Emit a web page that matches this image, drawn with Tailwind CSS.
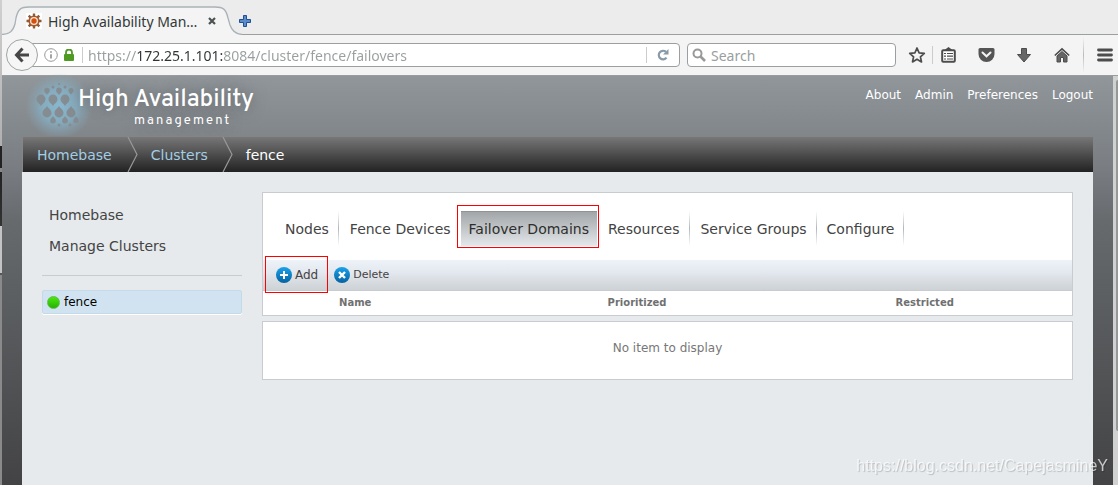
<!DOCTYPE html>
<html lang="en">
<head>
<meta charset="utf-8">
<title>High Availability Management</title>
<script src="https://cdn.jsdelivr.net/npm/@tailwindcss/browser@4"></script>
</head>
<body class="flex min-h-screen bg-[#ececec] font-['DejaVu_Sans',sans-serif]">
<div class="w-[2px] shrink-0 bg-[linear-gradient(to_bottom,#d0d0d0_0px,#b0b0b0_146px,#222_146px,#222_168px,#888_168px,#888_172px,#222_172px,#333_226px,#c4c4c4_226px,#c4c4c4_273px,#555_273px,#555_275px,#8a8a8a_275px)]"></div>
<div class="flex min-w-0 flex-1 flex-col">

  <!-- Browser chrome -->
  <header class="font-['Noto_Sans',sans-serif] text-[#333839]">
    <div class="relative h-[35px] border-b border-[#9b9f9f] bg-[#ececec]">
      <svg class="absolute top-0 left-0" width="240" height="35" viewBox="0 0 240 35" fill="none">
        <path d="M0 35V34C8 34 11 31 13 24L14 18C16 9 19 7 27 7H213C221 7 224 9 226 18L228 25C230 31 233 34 240 34V35Z" fill="#f4f4f4"/>
        <path d="M0 34.500C8 34 11 31 13 24L14 18C16 9 19 7 27 7H213C221 7 224 9 226 18L228 25C230 31 233 34 240 34.500" stroke="#a9b2b8" stroke-width="1.300"/>
      </svg>
      <div class="relative flex h-[34px] items-end pb-[3px] pl-6">
        <svg class="mb-[2px]" width="16" height="16" viewBox="0 0 16 16">
          <rect width="16" height="16" fill="#fff"/>
          <g stroke="#8a5a3a" stroke-width="2.400"><path d="M8 0.500V15.500M0.500 8H15.500M2.700 2.700L13.300 13.300M13.300 2.700L2.700 13.300"/></g>
          <circle cx="8" cy="8" r="5.600" fill="#a8562a"/><circle cx="8" cy="8" r="4" fill="#f3e4d4"/><circle cx="8" cy="8" r="2.700" fill="#d4500c"/>
        </svg>
        <span class="ml-[6px] w-[150px] text-sm leading-[18px]">High Availability Man…</span>
        <button class="mb-[6px] ml-[10px]" aria-label="Close tab"><svg class="block" width="8" height="8" viewBox="0 0 8 8"><path d="M1 1L7 7M7 1L1 7" stroke="#4c5252" stroke-width="2.200"/></svg></button>
        <button class="mb-1 ml-[23px]" aria-label="New tab"><svg class="block" width="12" height="12" viewBox="0 0 12 12"><path d="M4.500.5h3v4h4v3h-4v4h-3v-4h-4v-3h4z" fill="#5b8bc9" stroke="#1f4f96"/></svg></button>
      </div>
    </div>
    <div class="flex h-[41px] items-center border-b border-[#999d9f] bg-[#f4f4f4] pr-[5px] pl-1">
      <button class="relative z-10 flex size-8 shrink-0 items-center justify-center rounded-full border border-[#a0a4a4] bg-[#f6f6f6]" aria-label="Back">
        <svg width="16" height="16" viewBox="0 0 16 16" fill="none" stroke="#474747" stroke-width="3"><path d="M8.500 1.500L2.500 8L8.500 14.500M3 8H15"/></svg>
      </button>
      <div class="-ml-2 flex h-6 min-w-0 flex-1 items-center rounded-r-sm border border-[#9b9f9f] bg-white pl-[13px]">
        <svg class="shrink-0" width="14" height="14" viewBox="0 0 14 14" fill="none"><circle cx="7" cy="7" r="6.300" stroke="#999"/><path d="M7 6.200V10.500M7 3.200V4.800" stroke="#888" stroke-width="1.500"/></svg>
        <svg class="ml-[6px] shrink-0" width="10" height="12" viewBox="0 0 10 12"><path d="M2 6V3.500a3 3 0 0 1 6 0V6" fill="none" stroke="#4e9a22" stroke-width="1.800"/><rect y="5" width="10" height="7" rx="1" fill="#4e9a22"/></svg>
        <span class="ml-2 h-4 w-px bg-[#ccc]"></span>
        <input aria-label="Address" value="https://172.25.1.101:8084/cluster/fence/failovers" class="ml-[5px] min-w-0 flex-1 bg-[linear-gradient(to_right,#999e9e_48px,#2e3436_48px,#2e3436_135px,#999e9e_135px)] bg-clip-text pt-[2px] text-sm text-transparent outline-none">
        <span class="h-4 w-px bg-[#ccc]"></span>
        <button class="mx-[10px]" aria-label="Reload"><svg class="block" width="12" height="12" viewBox="0 0 12 12"><path d="M9.500 8.700A4.300 4.300 0 1 1 9 2.900" fill="none" stroke="#8a9aa8" stroke-width="2.200"/><path d="M11.500 0V5.500H6z" fill="#8a9aa8"/></svg></button>
      </div>
      <label class="ml-[7px] flex h-6 w-[209px] items-center rounded-sm border border-[#9b9f9f] bg-white pl-1">
        <svg class="shrink-0" width="14" height="14" viewBox="0 0 14 14" fill="none" stroke="#999"><circle cx="5.500" cy="5.500" r="4" stroke-width="2"/><path d="M8.500 8.500L13 13" stroke-width="2.600"/></svg>
        <input aria-label="Search" placeholder="Search" class="ml-[5px] w-full pt-[2px] text-sm outline-none placeholder:text-[#999e9e]">
      </label>
      <button class="ml-3" aria-label="Bookmark"><svg class="block" width="18" height="18" viewBox="0 0 18 18"><path d="M9 2L11.100 6.800L16.300 7.300L12.400 10.800L13.500 15.900L9 13.200L4.500 15.900L5.600 10.800L1.700 7.300L6.900 6.800Z" fill="none" stroke="#4c4c4c" stroke-width="1.700" stroke-linejoin="round"/></svg></button>
      <span class="ml-[6px] h-[18px] w-px bg-[#ccc]"></span>
      <button class="ml-2" aria-label="Bookmarks menu"><svg class="block" width="15" height="16" viewBox="0 0 15 16"><path d="M3.500 3L7.500 0L11.500 3" fill="#4c4c4c"/><rect x="1.200" y="3.200" width="12.600" height="11.600" rx="1" fill="#fff" stroke="#4c4c4c" stroke-width="2"/><path d="M3 6.500H5M6 6.500H12M3 9.200H5M6 9.200H12M3 12H5M6 12H12" stroke="#4c4c4c" stroke-width="1.200"/></svg></button>
      <button class="ml-[22px]" aria-label="Pocket"><svg class="block" width="17" height="16" viewBox="0 0 17 16"><path d="M2 1H15Q16.500 1 16.500 2.500V7A8 8 0 0 1 .5 7V2.500Q.5 1 2 1Z" fill="#555"/><path d="M4.500 5.500L8.500 9.300L12.500 5.500" fill="none" stroke="#f4f4f4" stroke-width="2" stroke-linecap="round"/></svg></button>
      <button class="ml-[22px]" aria-label="Downloads"><svg class="block" width="14" height="15" viewBox="0 0 14 15"><path d="M4.500.5H9.500V6.500H13.500L7 14L.5 6.500H4.500Z" fill="#666" stroke="#4c4c4c"/></svg></button>
      <button class="ml-[23px]" aria-label="Home"><svg class="block" width="16" height="16" viewBox="0 0 16 16"><path d="M.8 8.500L8 1.800L15.200 8.500" fill="none" stroke="#4c4c4c" stroke-width="1.700"/><path d="M3 9L8 4.500L13 9V15H9.500V10.500H6.500V15H3Z" fill="#666" stroke="#4c4c4c"/></svg></button>
      <span class="ml-[13px] h-9 w-px bg-[linear-gradient(to_bottom,transparent,#bbb,transparent)]"></span>
      <button class="ml-[13px]" aria-label="Menu"><svg class="block" width="16" height="14" viewBox="0 0 16 14"><path d="M1.500 2H14.500M1.500 7H14.500M1.500 12H14.500" stroke="#4c4c4c" stroke-width="2.800" stroke-linecap="round"/></svg></button>
    </div>
  </header>

  <div class="flex flex-1">
    <div class="flex min-w-0 flex-1 flex-col bg-[linear-gradient(to_bottom,#90969a_0px,#7a7e83_90px,#666a6d_146px,#434345_409px)] px-5">
      <!-- Product banner -->
      <div class="flex h-[60px] justify-between">
        <a href="#" class="flex text-white" aria-label="High Availability management">
          <svg class="shrink-0 overflow-visible" width="56" height="60" viewBox="0 0 56 60">
            <defs>
              <radialGradient id="glow"><stop offset="0" stop-color="#88b8d0"/><stop offset=".5" stop-color="#85b0c5" stop-opacity=".85"/><stop offset="1" stop-color="#85a8b8" stop-opacity="0"/></radialGradient>
              <path id="drop" d="M0 7C-1 4-5 3-5-1A5 5 0 0 1 5-1C5 3 1 4 0 7Z"/>
              <path id="drip" d="M0-7C-1-4-5-3-5 1A5 5 0 0 0 5 1C5-3 1-4 0-7Z"/>
            </defs>
            <ellipse cx="37" cy="30" rx="34" ry="33" fill="url(#glow)"/>
            <g fill="#858d93">
              <circle cx="37" cy="8" r="1"/><circle cx="31" cy="11" r="1.500"/><circle cx="43" cy="11" r="1.500"/>
              <use href="#drop" transform="translate(25 15) scale(.55)"/><use href="#drop" transform="translate(37 15) scale(.58)"/><use href="#drop" transform="translate(49 15) scale(.52)"/>
              <use href="#drop" transform="translate(19 24) scale(.9)"/><use href="#drop" transform="translate(31 24) scale(.9)"/><use href="#drop" transform="translate(43 24) scale(.9)"/>
              <use href="#drip" transform="translate(25 36) scale(.9)"/><use href="#drip" transform="translate(37 36) scale(.9)"/><use href="#drip" transform="translate(49 36) scale(.9)"/>
              <use href="#drip" transform="translate(31 44) scale(.58)"/><use href="#drip" transform="translate(43 44) scale(.58)"/><use href="#drip" transform="translate(54 44) scale(.52)"/>
              <circle cx="37" cy="49" r="1.500"/><circle cx="48" cy="49" r="1.500"/>
            </g>
          </svg>
          <span class="pt-[10px] font-['Overpass','Noto_Sans',sans-serif] [text-shadow:0_0_14px_#5c6064]">
            <span class="block text-2xl leading-7 font-medium">High Availability</span>
            <span class="block pl-14 text-[13px] leading-[14px] tracking-[2px]">management</span>
          </span>
        </a>
        <nav class="flex gap-[14px] pt-[11px] text-xs leading-4 text-white">
          <a href="#">About</a><a href="#">Admin</a><a href="#">Preferences</a><a href="#">Logout</a>
        </nav>
      </div>

      <!-- Breadcrumb -->
      <nav class="flex h-9 items-center border-t border-l border-[#858585] bg-[linear-gradient(to_bottom,#777,#222)] pl-[14px] text-sm text-[#a3cde4]">
        <a href="#">Homebase</a>
        <svg class="mr-[13px] ml-[15px]" width="11" height="35" viewBox="0 0 11 35"><path d="M1 0L10 17.500L1 35" fill="none" stroke="#999" stroke-width="1.200"/></svg>
        <a href="#">Clusters</a>
        <svg class="mr-[13px] ml-[14px]" width="11" height="35" viewBox="0 0 11 35"><path d="M1 0L10 17.500L1 35" fill="none" stroke="#999" stroke-width="1.200"/></svg>
        <span class="text-white">fence</span>
      </nav>

      <div class="flex flex-1 gap-5 bg-[#e6eaed] p-5">
        <!-- Sidebar -->
        <aside class="w-[200px] shrink-0 pt-3 text-[#444]">
          <a href="#" class="block pl-[7px] text-sm leading-[22px]">Homebase</a>
          <a href="#" class="mt-[9px] block pl-[7px] text-sm leading-[22px]">Manage Clusters</a>
          <hr class="mt-[18px] border-[#c8ccd0]">
          <a href="#" class="mt-[14px] flex h-6 items-center rounded-xs border border-[#c3dbe9] bg-[#d1e3f0] pl-1 text-xs text-black shadow-[0_1px_0_#fff]">
            <span class="mr-1 size-[13px] rounded-full border border-[#5cc040] bg-[linear-gradient(to_bottom,#4ae80e,#27b008)]"></span>fence
          </a>
        </aside>

        <!-- Failover domains -->
        <main class="min-w-0 flex-1 text-[#444]">
          <section class="border border-[#c8ccd0] bg-white pt-[18px]">
            <nav class="ml-3 flex h-[35px] text-sm leading-[37px]">
              <a href="#" class="relative px-[10px] after:absolute after:top-0 after:right-0 after:h-full after:w-px after:bg-[linear-gradient(to_bottom,transparent,#b0b8bd,transparent)]">Nodes</a>
              <a href="#" class="relative pr-[10px] pl-[11px]">Fence Devices</a>
              <a href="#" aria-current="page" class="relative border-t border-[#8f9395] bg-[linear-gradient(to_bottom,#a2a6a8,#e4e8ea)] px-2 leading-[35px] text-[#2e2e2e]">Failover Domains<span class="absolute -top-[7px] -right-[2px] -bottom-[2px] -left-1 border border-[#f00]"></span></a>
              <a href="#" class="relative px-[11px] after:absolute after:top-0 after:right-0 after:h-full after:w-px after:bg-[linear-gradient(to_bottom,transparent,#b0b8bd,transparent)]">Resources</a>
              <a href="#" class="relative px-[10px] after:absolute after:top-0 after:right-0 after:h-full after:w-px after:bg-[linear-gradient(to_bottom,transparent,#b0b8bd,transparent)]">Service Groups</a>
              <a href="#" class="relative px-[10px] after:absolute after:top-0 after:right-0 after:h-full after:w-px after:bg-[linear-gradient(to_bottom,transparent,#b0b8bd,transparent)]">Configure</a>
            </nav>
            <div class="mt-[14px] flex h-[31px] items-center border-b border-[#c8ccd0] bg-[linear-gradient(to_bottom,#edf3f9,#e4e8ef_40%,#cdd2d5)] pl-[13px]">
              <button class="relative flex items-center gap-[3px] text-xs"><svg width="16" height="16" viewBox="0 0 16 16"><defs><linearGradient id="blue" x2="0" y2="1"><stop stop-color="#1ba2ea"/><stop offset="1" stop-color="#0562a0"/></linearGradient></defs><circle cx="8" cy="8" r="8" fill="url(#blue)"/><path d="M8 4V12M4 8H12" stroke="#fff" stroke-width="2"/></svg>Add<span class="absolute -top-[11px] -right-[10px] -bottom-[10px] -left-[11px] border border-[#f00]"></span></button>
              <button class="ml-4 flex items-center gap-[3px] text-[11px]"><svg width="16" height="16" viewBox="0 0 16 16"><circle cx="8" cy="8" r="8" fill="url(#blue)"/><path d="M5 5L11 11M11 5L5 11" stroke="#fff" stroke-width="2.400"/></svg>Delete</button>
            </div>
            <table class="w-full table-fixed text-left text-[10px] leading-6 text-[#707070]">
              <colgroup><col class="w-[9.4%]"><col class="w-[33.2%]"><col class="w-[35.6%]"><col></colgroup>
              <thead><tr><td></td><th scope="col">Name</th><th scope="col">Prioritized</th><th scope="col">Restricted</th></tr></thead>
            </table>
          </section>
          <p class="mt-[5px] border border-[#c8ccd0] bg-white pt-[17px] pb-[22px] text-center text-xs leading-[18px] text-[#777]">No item to display</p>
        </main>
      </div>
    </div>
    <!-- Page scroll bar -->
    <div class="w-[5px] shrink-0 bg-[#d0d2d2] pt-1 pl-[3px]"><div class="h-[351px] rounded-l-xs bg-[#949898]"></div></div>
  </div>
</div>
<p class="pointer-events-none fixed right-[10px] bottom-[9px] font-['Liberation_Sans',sans-serif] text-base leading-5 text-white/70 [text-shadow:1px_1px_1px_#00000030]">https://blog.csdn.net/CapejasmineY</p>
</body>
</html>
